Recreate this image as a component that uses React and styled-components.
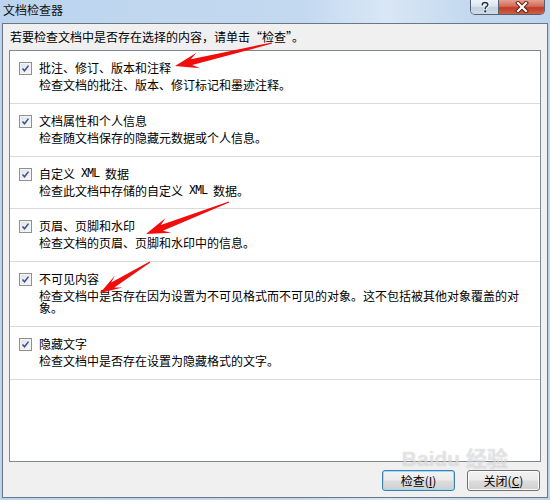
import React from 'react'
import styled, { createGlobalStyle } from 'styled-components'

const GlobalStyle = createGlobalStyle`
  html, body {
    margin: 0;
    padding: 0;
  }
  body {
    font-family: "Noto Sans CJK SC", "Noto Sans", sans-serif;
    font-size: 12px;
    color: #000;
  }
`

const Window = styled.div`
  position: relative;
  width: 550px;
  height: 500px;
  box-sizing: border-box;
  padding: 0 2px 2px;
  display: flex;
  flex-direction: column;
  overflow: hidden;
  background: linear-gradient(90deg, #bcd4ee 0%, #c3d9f0 55%, #d9e7f5 70%, #c4d9ef 85%, #bdd4ec 100%);
`

const TitleBar = styled.div`
  height: 23px;
  display: flex;
  justify-content: space-between;
  align-items: flex-start;
`

const Title = styled.div`
  padding-left: 1px;
  line-height: 20px;
  font-size: 12px;
  color: #111;
`

const Caption = styled.div`
  display: flex;
  height: 14px;
  margin-right: 3px;
  border: 1px solid #56616f;
  border-top: none;
  border-radius: 0 0 5px 5px;
  overflow: hidden;
`

const CaptionBtn = styled.div`
  width: ${p => p.$w}px;
  height: 100%;
  display: flex;
  align-items: center;
  justify-content: center;
  background: ${p => p.$close
    ? 'linear-gradient(180deg, #e6a090 0%, #d26b58 45%, #c13b26 55%, #cf5f45 100%)'
    : 'linear-gradient(180deg, #eef3f9 0%, #d8e2ee 45%, #c2d0e0 55%, #cfdbe8 100%)'};
  & + & {
    border-left: 1px solid #56616f;
  }
`

const Frame = styled.div`
  flex: 1;
  min-height: 0;
  display: flex;
  flex-direction: column;
  border: 1px solid #6c7785;
  background: #f0f0f0;
  padding: 0 6px 6px;
`

const Prompt = styled.div`
  height: 26px;
  line-height: 26px;
  padding-left: 1px;
`

const ListBox = styled.div`
  flex: 1;
  min-height: 0;
  border: 1px solid #828790;
  background: #fff;
  display: flex;
  flex-direction: column;
`

const Row = styled.div`
  display: grid;
  grid-template-columns: 13px 1fr;
  column-gap: 7px;
  row-gap: 4px;
  padding: 11px 13px 11.75px 9px;
  border-bottom: 1px solid #dadada;
`

const RowTitle = styled.div`
  grid-column: 2;
  height: 12px;
  line-height: 12px;
`

const RowDesc = styled.div`
  grid-column: 2;
  line-height: 12px;
`

const Mono = styled.span`
  font-family: "Liberation Mono", monospace;
  letter-spacing: -1.2px;
  line-height: 1;
  vertical-align: top;
`

const CheckBox = styled.span`
  grid-column: 1;
  grid-row: 1;
  align-self: center;
  width: 13px;
  height: 13px;
  box-sizing: border-box;
  border: 1px solid #8e8f8f;
  background: linear-gradient(135deg, #dfe3ea 0%, #f6f7f9 100%);
  box-shadow: inset 0 0 0 1px #f4f4f4;
  display: flex;
  align-items: center;
  justify-content: center;
`

const ButtonBar = styled.div`
  display: flex;
  justify-content: flex-end;
  gap: 12px;
  margin-top: 8px;
  padding-right: 1px;
`

const Button = styled.button`
  width: 73px;
  height: 21px;
  box-sizing: border-box;
  padding: 0;
  border: 1px solid ${p => (p.$default ? '#3c7fb1' : '#707070')};
  border-radius: 3px;
  background: linear-gradient(180deg, #f2f2f2 0%, #ebebeb 48%, #dddddd 52%, #cfcfcf 100%);
  box-shadow: inset 0 0 0 1px ${p => (p.$default ? '#9fdcf3' : '#fbfbfb')};
  font-family: "Noto Sans CJK SC", sans-serif;
  font-size: 12px;
  line-height: 19px;
  color: #000;
  u {
    text-underline-offset: 1px;
  }
`

const Watermark = styled.div`
  position: absolute;
  right: 42px;
  bottom: 30px;
  font-family: "Liberation Sans", "Noto Sans CJK SC", sans-serif;
  font-size: 21px;
  font-weight: bold;
  line-height: 22px;
  color: rgba(255, 255, 255, 0.5);
  text-shadow: 0 0 1px rgba(110, 110, 110, 0.4);
  pointer-events: none;
`

const Overlay = styled.svg`
  position: absolute;
  left: 0;
  top: 0;
  pointer-events: none;
`

const items = [
  { title: '批注、修订、版本和注释', desc: '检查文档的批注、版本、修订标记和墨迹注释。' },
  { title: '文档属性和个人信息', desc: '检查随文档保存的隐藏元数据或个人信息。' },
  {
    title: <>自定义<Mono> XML </Mono>数据</>,
    desc: <>检查此文档中存储的自定义<Mono> XML </Mono>数据。</>,
  },
  { title: '页眉、页脚和水印', desc: '检查文档的页眉、页脚和水印中的信息。' },
  { title: '不可见内容', desc: '检查文档中是否存在因为设置为不可见格式而不可见的对象。这不包括被其他对象覆盖的对象。' },
  { title: '隐藏文字', desc: '检查文档中是否存在设置为隐藏格式的文字。' },
]

// tail -> tip, shaft widening toward a barbed head
const arrowPoints = (x1, y1, x2, y2, head = 18, half = 7) => {
  const len = Math.hypot(x2 - x1, y2 - y1)
  const dx = (x2 - x1) / len
  const dy = (y2 - y1) / len
  const nx = -dy
  const ny = dx
  const bx = x2 - dx * head
  const by = y2 - dy * head
  const p = (x, y, k, back = 0) => `${(x + nx * k - dx * back).toFixed(1)},${(y + ny * k - dy * back).toFixed(1)}`
  return [
    p(x1, y1, 0.6),
    p(bx, by, 3, -3),
    p(bx, by, half, 4),
    `${x2},${y2}`,
    p(bx, by, -half, 4),
    p(bx, by, -3, -3),
    p(x1, y1, -0.6),
  ].join(' ')
}

const arrows = [
  [272, 43, 175, 66, 20, 8],
  [229, 202, 146, 234, 20, 8],
  [150, 262, 100, 293, 18, 7],
]

const Check = () => (
  <CheckBox>
    <svg width="9" height="9" viewBox="0 0 9 9">
      <path d="M1.5 4.6 L3.5 6.8 L7.5 1.6" fill="none" stroke="#3b4f8f" strokeWidth="1.5" />
    </svg>
  </CheckBox>
)

export default function App() {
  return (
    <>
      <GlobalStyle />
      <Window>
        <TitleBar>
          <Title>文档检查器</Title>
          <Caption>
            <CaptionBtn $w={27}>
              <svg width="10" height="12" viewBox="0 0 10 12">
                <path d="M2.2 4 Q2.2 1.4 5 1.4 Q7.8 1.4 7.8 3.8 Q7.8 5.4 5.6 6.2 L5.2 7.8"
                  fill="none" stroke="#f5f8fb" strokeWidth="3.2" strokeLinecap="round" />
                <path d="M2.2 4 Q2.2 1.4 5 1.4 Q7.8 1.4 7.8 3.8 Q7.8 5.4 5.6 6.2 L5.2 7.8"
                  fill="none" stroke="#2a3442" strokeWidth="1.5" strokeLinecap="round" />
                <circle cx="5.2" cy="10.3" r="1.1" fill="#2a3442" />
              </svg>
            </CaptionBtn>
            <CaptionBtn $w={45} $close>
              <svg width="14" height="12" viewBox="0 0 14 12">
                <path d="M3 2 L11 10 M11 2 L3 10" stroke="#5a1a12" strokeWidth="4" strokeLinecap="square" />
                <path d="M3 2 L11 10 M11 2 L3 10" stroke="#fff" strokeWidth="2.2" strokeLinecap="square" />
              </svg>
            </CaptionBtn>
          </Caption>
        </TitleBar>
        <Frame>
          <Prompt>若要检查文档中是否存在选择的内容，请单击“检查”。</Prompt>
          <ListBox>
            {items.map((it, i) => (
              <Row key={i}>
                <Check />
                <RowTitle>{it.title}</RowTitle>
                <RowDesc>{it.desc}</RowDesc>
              </Row>
            ))}
          </ListBox>
          <ButtonBar>
            <Button $default>检查(<u>I</u>)</Button>
            <Button>关闭(<u>C</u>)</Button>
          </ButtonBar>
        </Frame>
        <Watermark>Baidu 经验</Watermark>
        <Overlay width="550" height="500" viewBox="0 0 550 500">
          {arrows.map(([x1, y1, x2, y2, h, w], i) => (
            <polygon key={i} points={arrowPoints(x1, y1, x2, y2, h, w)} fill="#f20d0d" />
          ))}
        </Overlay>
      </Window>
    </>
  )
}
